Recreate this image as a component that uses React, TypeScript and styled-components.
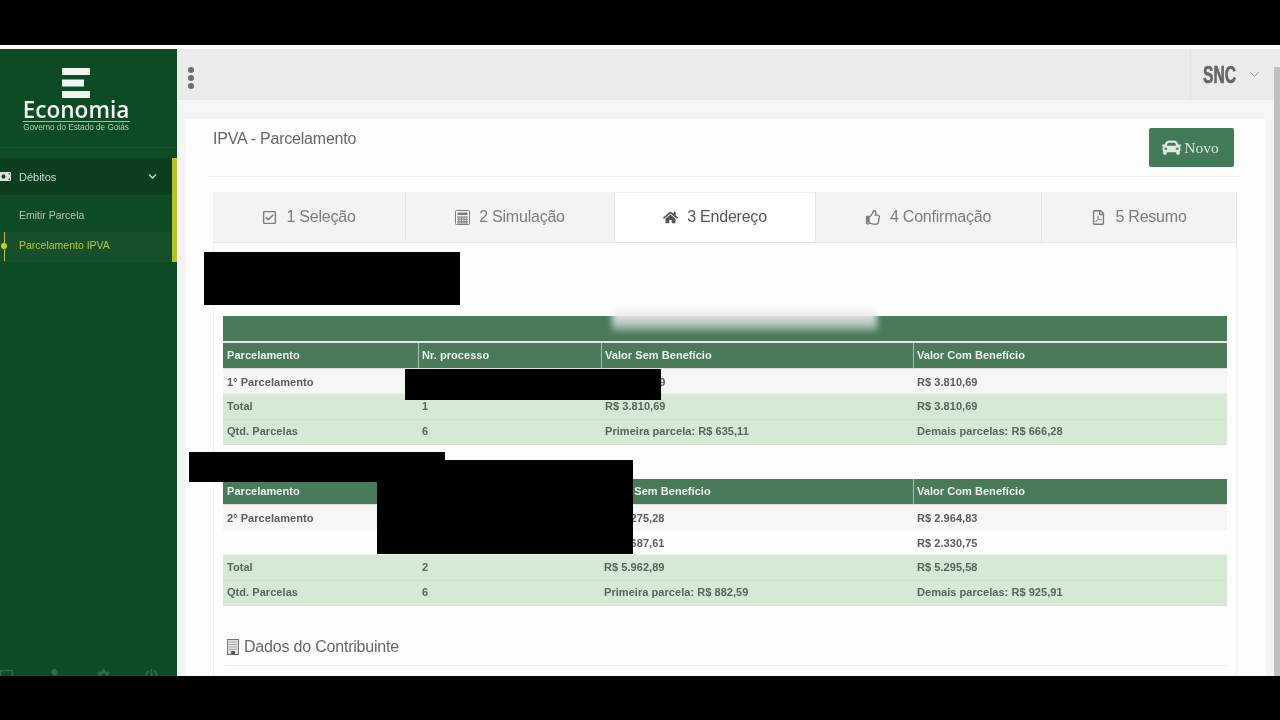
import React from 'react';
import styled, { createGlobalStyle } from 'styled-components';
import {
  FaCar, FaChevronDown, FaCog, FaHome, FaMoneyBill, FaPowerOff,
  FaRegCheckSquare, FaRegFilePdf, FaRegThumbsUp, FaUser, FaDesktop,
} from 'react-icons/fa';
import { ChevronDown } from 'lucide-react';

const Global = createGlobalStyle`
  html, body { margin: 0; padding: 0; background: #000; }
  * { box-sizing: border-box; }
  body { font-family: "Liberation Sans", Arial, sans-serif; }
`;

const Page = styled.div`
  position: relative; width: 1280px; height: 720px; overflow: hidden;
  display: flex; flex-direction: column; background: #000;
`;
const Letterbox = styled.div<{ $h: number }>`height: ${p => p.$h}px; flex: none; background: #000;`;
const Strip = styled.div`height: 4px; flex: none; background: #fff;`;
const Frame = styled.div`flex: 1; display: flex; min-height: 0; overflow: hidden; filter: blur(0.45px);`;

const Sidebar = styled.aside`
  width: 177px; flex: none; background: #0c4b24; display: flex; flex-direction: column; overflow: hidden;
`;
const Brand = styled.div`
  height: 99px; flex: none; margin-bottom: 10px; border-bottom: 1px solid #1c5733;
  display: flex; flex-direction: column; align-items: center; padding: 19px 25px 0 0; color: #f2f5f2;
`;
const BrandName = styled.div`
  font-family: "Open Sans", sans-serif; font-weight: 600; font-size: 22.6px; line-height: 22px;
  width: 107px; text-align: center; white-space: nowrap; display: flex; justify-content: center;
  border-bottom: 1px solid #a8bfae;
`;
const BrandTag = styled.div`
  font-family: "Liberation Sans", sans-serif; font-size: 8.2px; line-height: 12px; color: #b9cbbd; white-space: nowrap;
`;
const Menu = styled.nav`border-right: 5px solid #b4c22c; display: flex; flex-direction: column;`;
const MenuHead = styled.div`
  height: 37px; background: #0b3f20; display: flex; align-items: center; padding: 0 15px 0 0;
  color: #cfdcd2; font-size: 11px; position: relative;
  svg:first-child { margin-left: -4px; width: 15px; height: 15px; color: #d8e2da; }
  span { margin-left: 8px; flex: 1; }
`;
const SubItem = styled.div<{ $active?: boolean }>`
  height: ${p => (p.$active ? '30px' : '37px')};
  padding: ${p => (p.$active ? '0 0 4px 19px' : '3px 0 0 19px')};
  display: flex; align-items: center; font-size: 10.5px; position: relative;
  color: ${p => (p.$active ? '#b9c62d' : '#b3c6b8')};
  background: ${p => (p.$active ? '#174f2d' : 'transparent')};
`;
const Dot = styled.i`
  position: absolute; left: 1px; top: 11px; width: 6px; height: 6px; border-radius: 50%; background: #c6d02e;
  &::before { content: ""; position: absolute; left: 2.5px; top: -11px; width: 1px; height: 29px; background: #b4c22c; }
`;
const SideFoot = styled.div`
  margin-top: auto; height: 7px; display: flex; justify-content: space-between; padding: 0 19px 0 0;
  color: #2f6a45; overflow: hidden;
  svg { width: 13px; height: 13px; flex: none; }
`;

const Main = styled.main`flex: 1; min-width: 0; background: #f5f5f5; display: flex; flex-direction: column;`;
const TopBar = styled.header`
  height: 51px; flex: none; background: #ebebeb; display: flex; align-items: center; justify-content: space-between;
`;
const Kebab = styled.div`
  margin: 7px 0 0 11px; display: flex; flex-direction: column; gap: 1.6px;
  i { width: 6px; height: 6px; border-radius: 50%; background: #6d6d6d; display: block; }
`;
const UserBox = styled.div`
  width: 90px; height: 100%; border-left: 1px solid #e2e2e2; display: flex; align-items: center; padding-left: 12px; color: #666;
  b { font-size: 23px; line-height: 26px; font-weight: 700; transform: scaleX(.68); transform-origin: left; width: 44px; flex: none; -webkit-text-stroke: .7px #666; }
`;
const Card = styled.section`
  flex: 1; margin: 19px 14px 0 9px; background: #fdfdfd; padding: 0 25px 0 22px; display: flex; flex-direction: column; min-height: 0;
`;
const CardHead = styled.div`
  height: 58px; flex: none; padding: 9px 7px 0 5px; border-bottom: 1px solid #eeeeee;
  display: flex; justify-content: space-between; align-items: flex-start;
`;
const Title = styled.h1`margin: 2px 0 0; font-size: 16px; letter-spacing: -.22px; line-height: 18px; font-weight: 400; color: #666;`;
const NewButton = styled.button`
  width: 85px; height: 39px; border: 0; border-radius: 2px; background: #437a58; color: #dfe9e2;
  font-family: "Liberation Serif", serif; font-size: 15.5px; display: flex; align-items: center; justify-content: center; gap: 3px; padding: 0;
  svg { width: 19px; height: 19px; margin-left: -2px; }
`;
const Tabs = styled.div`
  margin: 15px 4px 0 5px; height: 51px; flex: none; display: flex; background: #f3f4f0; border-bottom: 1px solid #e8e8e8;
`;
const Tab = styled.div<{ $w: number; $active?: boolean }>`
  width: ${p => p.$w}px; display: flex; align-items: center; justify-content: center; gap: 9px; font-size: 16px; letter-spacing: -.22px;
  color: ${p => (p.$active ? '#555' : '#7c7c7c')};
  background: ${p => (p.$active ? '#ffffff' : 'transparent')};
  border-right: 1px solid #e6e6e2;
  ${p => (p.$active ? 'box-shadow: inset 0 1px 0 #eeeeee;' : '')}
  svg { width: 15px; height: 15px; color: ${p => (p.$active ? '#555' : '#7c7c7c')}; flex: none; }
`;
const Panel = styled.div`
  margin: 0 4px 0 5px; flex: 1; border-left: 1px solid #f0f0f0; border-right: 1px solid #f0f0f0; background: #fefefe;
  padding: 73px 9px 0; min-height: 0; overflow: hidden;
`;
const Table = styled.table<{ $gap?: number }>`
  width: 1004px; border-collapse: separate; border-spacing: 0; table-layout: fixed; margin-top: ${p => p.$gap ?? 0}px;
  font-size: 11px; letter-spacing: .05px; font-weight: 700;
`;
const TitleCell = styled.th`height: 27px; background: #497a5a; border-bottom: 2px solid #e4ebe6; padding: 0;`;
const HeadCell = styled.th`
  height: 26px; background: #497a5a; color: #ecf2ee; text-align: left; padding: 0 4px 2px; font-weight: 700;
  border-bottom: 1px solid #dbe5de;
  & + & { border-left: 1px solid #a9c1b1; padding-left: 3px; }
`;
const Cell = styled.td<{ $total?: boolean; $plain?: boolean }>`
  height: ${p => (p.$total ? 25.5 : 25)}px; padding: ${p => (p.$total ? '0 4px 1px' : '1px 4px 0')};
  color: ${p => (p.$total ? '#55665a' : '#5c5c5c')};
  background: ${p => (p.$total ? '#d5e9d5' : p.$plain ? '#fdfdfd' : '#f6f6f6')};
  border-bottom: 1px solid ${p => (p.$total ? '#cfe3cf' : '#f0f0f0')};
`;
const Section = styled.h2`
  margin: 28px 0 0 2px; height: 32px; width: 1002px; border-bottom: 1px solid #ececec; display: flex; align-items: flex-start; gap: 5px;
  font-size: 16px; letter-spacing: -.2px; line-height: 25px; font-weight: 400; color: #666;
  svg { margin: 5px 0 0 2px; }
`;

const Redaction = styled.div<{ $x: number; $y: number; $w: number; $h: number }>`
  position: absolute; left: ${p => p.$x}px; top: ${p => p.$y}px; width: ${p => p.$w}px; height: ${p => p.$h}px; background: #000;
`;
const Smear = styled.div`
  position: absolute; left: 612px; top: 307px; width: 265px; height: 24px;
  background: linear-gradient(#f6f7f6 0, #e6ebe8 45%, #8aa896 100%); filter: blur(3px); opacity: .9;
`;
const Scrollbar = styled.div`position: absolute; right: 0; top: 67px; width: 6px; height: 609px; background: #c0c0c0;`;

const LogoMark = () => (
  <svg width="28" height="31" viewBox="0 0 28 31" fill="currentColor">
    <rect x="0" y="0" width="28" height="7" />
    <rect x="0" y="11.5" width="22" height="7" />
    <rect x="0" y="23" width="28" height="7" />
  </svg>
);
const BuildingIcon = () => (
  <svg width="12" height="16" viewBox="0 0 13 16" preserveAspectRatio="none">
    <rect x=".5" y=".5" width="12" height="15" fill="#dfe3e0" stroke="#6e6e6e" />
    <path d="M2 3h9M2 5.5h9M2 8h9M2 10.5h9" stroke="#a9aeab" />
    <rect x="4.5" y="12" width="4" height="3.5" fill="#555" />
  </svg>
);
const CalcIcon = () => (
  <svg viewBox="0 0 15 15" fill="none" stroke="currentColor">
    <rect x=".5" y=".5" width="14" height="14" rx="1" />
    <rect x="2.5" y="2.5" width="10" height="2.5" fill="currentColor" stroke="none" />
    <path d="M2 7h11M2 9.2h11M2 11.4h11M2 13h11M3.8 6.5v7M6.4 6.5v7M9 6.5v7M11.4 6.5v7" strokeWidth=".9" />
  </svg>
);

type Row = { c: [string, string, string, string]; total?: boolean; plain?: boolean };
const H = ['Parcelamento', 'Nr. processo', 'Valor Sem Benefício', 'Valor Com Benefício'];
const table1: Row[] = [
  { c: ['1° Parcelamento', '', 'R$ 3.810,69', 'R$ 3.810,69'] },
  { c: ['Total', '1', 'R$ 3.810,69', 'R$ 3.810,69'], total: true },
  { c: ['Qtd. Parcelas', '6', 'Primeira parcela: R$ 635,11', 'Demais parcelas: R$ 666,28'], total: true },
];
const table2: Row[] = [
  { c: ['2° Parcelamento', '', 'R$ 3.275,28', 'R$ 2.964,83'] },
  { c: ['', '', 'R$ 2.687,61', 'R$ 2.330,75'], plain: true },
  { c: ['Total', '2', 'R$ 5.962,89', 'R$ 5.295,58'], total: true },
  { c: ['Qtd. Parcelas', '6', 'Primeira parcela: R$ 882,59', 'Demais parcelas: R$ 925,91'], total: true },
];

const DataTable = ({ cols, rows, titled, gap }: { cols: number[]; rows: Row[]; titled?: boolean; gap?: number }) => (
  <Table $gap={gap}>
    <colgroup>{cols.map((w, i) => <col key={i} style={{ width: w }} />)}</colgroup>
    <thead>
      {titled && <tr><TitleCell colSpan={4} /></tr>}
      <tr>{H.map(h => <HeadCell key={h}>{h}</HeadCell>)}</tr>
    </thead>
    <tbody>
      {rows.map((r, i) => (
        <tr key={i}>{r.c.map((v, j) => <Cell key={j} $total={r.total} $plain={r.plain}>{v}</Cell>)}</tr>
      ))}
    </tbody>
  </Table>
);

export default function App() {
  return (
    <Page>
      <Global />
      <Letterbox $h={45} />
      <Strip />
      <Frame>
        <Sidebar>
          <Brand>
            <LogoMark />
            <BrandName>Economia</BrandName>
            <BrandTag>Governo do Estado de Goiás</BrandTag>
          </Brand>
          <Menu>
            <MenuHead>
              <FaMoneyBill />
              <span>Débitos</span>
              <FaChevronDown size={9} />
            </MenuHead>
            <SubItem>Emitir Parcela</SubItem>
            <SubItem $active><Dot />Parcelamento IPVA</SubItem>
          </Menu>
          <SideFoot>
            <FaDesktop /><FaUser /><FaCog /><FaPowerOff />
          </SideFoot>
        </Sidebar>
        <Main>
          <TopBar>
            <Kebab><i /><i /><i /></Kebab>
            <UserBox>
              <b>SNC</b>
              <ChevronDown size={15} strokeWidth={1.5} color="#8a8a8a" />
            </UserBox>
          </TopBar>
          <Card>
            <CardHead>
              <Title>IPVA - Parcelamento</Title>
              <NewButton><FaCar />Novo</NewButton>
            </CardHead>
            <Tabs>
              <Tab $w={193}><FaRegCheckSquare />1 Seleção</Tab>
              <Tab $w={209}><CalcIcon />2 Simulação</Tab>
              <Tab $w={201} $active><FaHome />3 Endereço</Tab>
              <Tab $w={226}><FaRegThumbsUp />4 Confirmação</Tab>
              <Tab $w={195}><FaRegFilePdf />5 Resumo</Tab>
            </Tabs>
            <Panel>
              <DataTable titled cols={[195, 183, 312, 314]} rows={table1} />
              <DataTable gap={34} cols={[195, 182, 313, 314]} rows={table2} />
              <Section><BuildingIcon />Dados do Contribuinte</Section>
            </Panel>
          </Card>
        </Main>
      </Frame>
      <Letterbox $h={44} />
      <Smear />
      <Redaction $x={204} $y={252} $w={256} $h={53} />
      <Redaction $x={405} $y={369} $w={256} $h={31} />
      <Redaction $x={189} $y={452} $w={256} $h={30} />
      <Redaction $x={377} $y={460} $w={256} $h={94} />
      <Scrollbar />
    </Page>
  );
}
